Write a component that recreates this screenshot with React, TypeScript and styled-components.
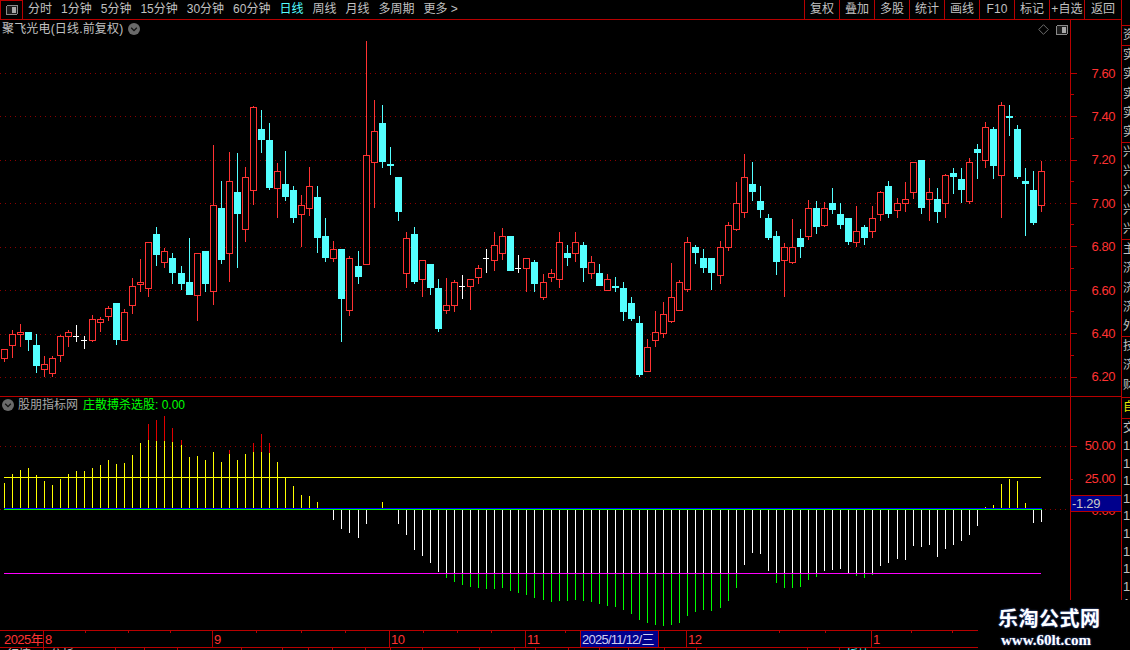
import React from "react";
import styled, { createGlobalStyle } from "styled-components";

const RED_LINE = "#b80000";
const RED = "#ff3232";
const CYAN = "#54ffff";
const GRAY = "#c0c0c0";
const FONT = `"Liberation Sans", "Noto Sans CJK SC", sans-serif`;

const Global = createGlobalStyle`
  html, body { margin: 0; padding: 0; background: #000; }
  body { font-family: ${FONT}; }
`;

const Page = styled.div`
  position: relative;
  display: flex;
  width: 1130px;
  height: 650px;
  overflow: hidden;
  background: #000;
  font-family: ${FONT};
`;

const Main = styled.div`
  display: flex;
  flex-direction: column;
  width: 1121px;
  flex: none;
`;

/* ---------- toolbar ---------- */
const Toolbar = styled.div`
  display: flex;
  align-items: stretch;
  height: 19px;
  flex: none;
  border-bottom: 1px solid ${RED_LINE};
  color: ${GRAY};
  font-size: 12px;
`;
const PanelToggle = styled.div`
  width: 23px;
  flex: none;
  box-sizing: border-box;
  display: flex;
  align-items: center;
  justify-content: center;
  border-right: 1px solid ${RED_LINE};
  border-top: 1px solid ${RED_LINE};
  border-left: 1px solid ${RED_LINE};
`;
const PeriodList = styled.div`
  display: flex;
  align-items: center;
  gap: 9px;
  padding-left: 5px;
  flex: 1;
`;
const Period = styled.span<{ $active?: boolean }>`
  color: ${(p) => (p.$active ? CYAN : GRAY)};
  line-height: 19px;
  white-space: nowrap;
`;
const ToolButton = styled.div<{ $w?: number }>`
  width: ${(p) => p.$w ?? 35}px;
  flex: none;
  box-sizing: border-box;
  border-left: 1px solid ${RED_LINE};
  text-align: center;
  line-height: 19px;
  white-space: nowrap;
  letter-spacing: 0.1px;
`;

/* ---------- panes ---------- */
const PricePane = styled.div`
  display: flex;
  height: 376px;
  flex: none;
  border-bottom: 1px solid ${RED_LINE};
  overflow: hidden;
`;
const IndicatorPane = styled.div`
  display: flex;
  height: 233px;
  flex: none;
  overflow: hidden;
`;
const Plot = styled.div`
  position: relative;
  width: 1070px;
  flex: none;
  svg.chart { display: block; }
`;
const PaneTitle = styled.div`
  position: absolute;
  left: 2px;
  top: 1px;
  display: flex;
  align-items: center;
  gap: 5px;
  font-size: 12px;
  line-height: 16px;
  color: ${GRAY};
  white-space: nowrap;
`;
const TitleText = styled.span`
  letter-spacing: 0.17px;
`;
const IndicatorTitle = styled(PaneTitle)`
  top: 0;
  gap: 4px;
  color: #a8a8a8;
`;
const Readout = styled.span`
  color: #00ff00;
  margin-left: 1px;
`;
const PaneTools = styled.div`
  position: absolute;
  right: 2px;
  top: 4px;
  display: flex;
  align-items: center;
  gap: 7px;
`;

const PriceAxis = styled.div`
  position: relative;
  flex: 1;
  box-sizing: border-box;
  border-left: 1px solid ${RED_LINE};
  padding-top: 31.8px;
`;
const PriceRow = styled.div`
  position: relative;
  height: 43.43px;
  display: flex;
  align-items: center;
  justify-content: flex-end;
  padding-right: 6px;
  &::before {
    content: "";
    position: absolute;
    left: 0;
    top: 21px;
    width: 6px;
    height: 1px;
    background: ${RED_LINE};
  }
  &::after {
    content: "";
    position: absolute;
    left: 0;
    bottom: 0;
    width: 3px;
    height: 1px;
    background: ${RED_LINE};
  }
`;
const AxisLabel = styled.span`
  color: ${RED};
  font-size: 13px;
  letter-spacing: -0.45px;
  line-height: 14px;
`;
const IndicatorAxis = styled(PriceAxis)`
  padding-top: 33px;
`;
const IndicatorRow = styled.div<{ $tick: number }>`
  position: relative;
  height: 32.5px;
  display: flex;
  align-items: center;
  justify-content: flex-end;
  padding-right: 6px;
  &::before {
    content: "";
    position: absolute;
    left: 0;
    top: 16px;
    width: ${(p) => p.$tick}px;
    height: 1px;
    background: ${RED_LINE};
  }
`;
const ValueBadge = styled.div`
  position: absolute;
  left: 0;
  right: 0;
  top: 98px;
  height: 15px;
  box-sizing: content-box;
  background: #00008c;
  border-top: 1px solid ${RED_LINE};
  border-bottom: 1px solid ${RED_LINE};
  color: #c8c8c8;
  font-size: 13px;
  line-height: 15px;
  padding-left: 1px;
  letter-spacing: -0.3px;
`;

/* ---------- time axis ---------- */
const TimeAxis = styled.div`
  position: relative;
  display: flex;
  height: 16px;
  flex: none;
  border-top: 1px solid ${RED_LINE};
  border-bottom: 1px solid ${RED_LINE};
  box-sizing: content-box;
`;
const TimeCell = styled.div<{ $w: number; $first?: boolean }>`
  width: ${(p) => p.$w}px;
  flex: none;
  box-sizing: border-box;
  border-left: ${(p) => (p.$first ? "none" : `1px solid ${RED_LINE}`)};
  padding-left: ${(p) => (p.$first ? 4 : 1)}px;
  color: ${RED};
  font-size: 13px;
  line-height: 17px;
  letter-spacing: -0.6px;
  white-space: nowrap;
  overflow: hidden;
`;
const MinorTick = styled.i`
  position: absolute;
  top: 0;
  width: 1px;
  height: 2px;
  background: ${RED_LINE};
`;
const CursorDate = styled.div`
  position: absolute;
  left: 580px;
  top: 0;
  width: 79px;
  height: 16px;
  box-sizing: border-box;
  background: #00008c;
  border-left: 1px solid ${RED_LINE};
  border-right: 1px solid ${RED_LINE};
  color: #d0d0f0;
  font-size: 13px;
  line-height: 17px;
  letter-spacing: -0.75px;
  padding-left: 1px;
  white-space: nowrap;
  overflow: hidden;
`;
const StatusRow = styled.div`
  display: flex;
  height: 3px;
  flex: none;
  overflow: hidden;
`;
const StatusCell = styled.div<{ $w: number; $color?: string; $first?: boolean }>`
  width: ${(p) => p.$w}px;
  flex: none;
  box-sizing: border-box;
  border-left: ${(p) => (p.$first ? "none" : `1px solid ${RED_LINE}`)};
  padding-left: ${(p) => (p.$first ? 7 : 6)}px;
  color: ${(p) => p.$color ?? GRAY};
  font-size: 12px;
  line-height: 14px;
  white-space: nowrap;
  overflow: hidden;
`;

/* ---------- right strip ---------- */
const Strip = styled.div`
  width: 9px;
  flex: none;
  box-sizing: border-box;
  border-left: 1px solid ${RED_LINE};
  display: flex;
  flex-direction: column;
  overflow: hidden;
`;
const StripSection = styled.div<{ $h: number; $plain?: boolean; $color?: string }>`
  height: ${(p) => p.$h}px;
  flex: none;
  box-sizing: border-box;
  border-top: ${(p) => (p.$plain ? "none" : `1px solid ${RED_LINE}`)};
  color: ${(p) => p.$color ?? GRAY};
  font-size: 12px;
  overflow: hidden;
`;
const StripChar = styled.div`
  height: 19.3px;
  line-height: 19px;
  padding-left: 1px;
  white-space: nowrap;
`;
const StripDigit = styled.div`
  height: 17.6px;
  line-height: 18px;
  padding-left: 1px;
  font-size: 13px;
  white-space: nowrap;
`;

/* ---------- watermark ---------- */
const Watermark = styled.div`
  position: absolute;
  right: 0;
  bottom: 0;
  width: 152px;
  height: 50px;
  background: #000;
  color: #fff;
  display: flex;
  flex-direction: column;
  align-items: flex-start;
  padding-left: 20px;
  box-sizing: border-box;
  text-shadow: 0 0 2px #4a70d8;
`;
const WatermarkName = styled.div`
  font-size: 20px;
  font-weight: 700;
  line-height: 26px;
  margin-top: 6px;
  letter-spacing: 0.5px;
`;
const WatermarkUrl = styled.div`
  font-family: "Liberation Serif", serif;
  font-size: 15px;
  font-weight: 700;
  line-height: 16px;
  margin-left: 3px;
`;

/* ---------- data ---------- */
type Row = [string, number, number, number, number];

const rowsA: Row[] = [
  ["r",748,748,776,785],["r",690,703,737,773],["r",672,697,704,740],["c",696,696,720,752],["c",702,735,797,818],
  ["r",768,793,809,830],["r",768,775,821,830],["r",705,709,767,785],["r",690,697,710,740],["w",675,708,708,725],
  ["w",708,720,720,746],["r",645,658,722,725],["r",651,658,670,695],["r",618,625,650,662],["c",609,609,720,734],
  ["r",628,637,722,722],["r",534,559,617,641],["r",477,547,554,575],["r",427,427,566,590],["c",381,402,465,497],
  ["r",445,454,488,503],["c",460,474,519,551],["c",498,519,552,570],["c",414,546,585,585],["r",460,460,587,662],
  ["c",453,453,552,576],["r",135,316,577,614],["c",243,324,480,491],["r",156,244,461,545],["c",159,276,342,503],
  ["r",201,232,389,425],["r",18,22,272,314],["c",30,87,120,158],["c",69,120,264,269],["r",189,214,266,353],
  ["c",153,252,291,302],["c",258,270,354,368],["r",285,316,344,442],["r",201,259,326,347],["c",258,291,414,458],
  ["c",354,408,474,485],["r",423,448,476,485],["c",447,447,597,725],
];
const rowsB: Row[] = [
  ["r",678,685,842,857],["c",663,708,741,762],["r",33,376,704,704],["r",210,304,398,533],["c",225,279,396,413],
  ["c",351,402,408,434],["c",441,441,546,572],["r",606,625,731,773],["c",591,612,756,761],["r",691,691,749,800],
  ["c",702,702,774,794],["c",747,774,897,905],["r",744,826,842,851],["r",750,757,827,845],["w",735,769,769,806],
  ["r",748,748,770,839],["r",705,715,743,761],["w",657,685,685,728],["r",606,646,692,722],["r",594,619,671,689],
  ["c",618,618,723,723],["w",675,715,715,728],["r",685,685,716,785],["c",690,696,762,785],["r",732,757,803,811],
  ["r",717,730,743,755],["r",606,637,749,773],["c",645,669,684,707],["r",606,637,671,695],["c",636,645,714,755],
  ["r",678,697,731,746],["c",702,729,768,768],["r",732,748,782,782],["c",741,768,774,785],["c",756,774,846,872],
  ["c",801,819,867,872],["c",858,879,1035,1040],["r",927,952,1025,1027],["r",843,907,932,950],["r",816,853,913,923],
  ["r",699,802,875,878],["r",750,757,842,842],["r",621,637,781,785],
];
const rowsC: Row[] = [
  ["c",465,472,489,522],["c",477,504,534,549],["c",504,504,549,600],["r",453,472,557,582],["r",396,406,473,482],
  ["r",276,340,419,423],["r",192,262,368,384],["c",216,282,306,333],["c",288,333,360,384],["c",372,384,444,450],
  ["c",423,438,516,555],["r",459,472,513,621],["r",387,472,518,522],["c",417,444,471,504],["r",330,355,440,450],
  ["c",333,354,411,432],["r",336,355,407,411],["c",294,339,360,372],["c",339,372,405,417],["c",384,384,456,465],
  ["r",348,424,458,471],["c",405,411,444,465],["r",348,385,425,444],["r",303,307,374,393],["c",273,288,372,384],
  ["r",324,340,362,384],["r",276,328,341,366],["r",216,217,308,327],["c",210,210,354,372],["r",264,307,329,393],
  ["c",294,327,366,399],["r",252,256,341,384],["c",234,249,261,312],["c",234,267,300,339],["r",204,217,335,342],
  ["c",162,177,189,267],["r",96,112,212,234],["c",111,117,228,267],["r",36,46,257,384],["c",45,78,84,138],
  ["c",105,117,261,267],["c",234,273,282,438],["c",243,300,399,405],["r",212,244,347,366],
];
const toScreen = (rows: Row[], off: number): Row[] =>
  rows.map(([k, a, b, c, d]) => [
    k,
    Math.round(off + a / 3),
    Math.round(off + b / 3),
    Math.round(off + c / 3),
    Math.round(off + d / 3),
  ]);
const candles: Row[] = [...toScreen(rowsA, 100), ...toScreen(rowsB, 30), ...toScreen(rowsC, 90)];

const colX = (i: number) => 4 + 8 * i + Math.floor((i + 0.5) / 22.2);

const yellowTops = [
  279,252,240,234,255,273,285,267,252,243,243,234,225,210,222,219,195,159,150,153,153,156,165,201,198,210,186,216,192,210,192,186,186,189,216,264,288,315,318,336,
];
const redTops: Record<number, number> = { 18: 102, 19: 90, 20: 78, 21: 114, 22: 150, 28: 180, 31: 159, 32: 132, 33: 159 };
const lows: Record<number, number> = { 41: 520, 42: 529, 43: 533, 44: 538, 45: 524 };
const lowsA = [
  72,105,150,168,189,216,234,246,255,261,264,267,267,264,273,279,285,294,300,306,303,303,300,303,306,312,318,321,330,342,360,369,375,378,375,369,348,336,330,333,324,303,264,195,159,162,213,249,
];
const lowsB = [248,248,245,224,215,197,194,191,206,212,218,209,182,173,161,164,122,125,119,155,131,119,107,89,62];
lowsA.forEach((v, k) => (lows[49 + k] = Math.round(500 + v / 3)));
lowsB.forEach((v, k) => (lows[97 + k] = Math.round(505 + v / 3)));
lows[119] = 541; lows[120] = 535; lows[121] = 526; lows[128] = 523; lows[129] = 522;
const highs: Record<number, number> = { 47: 502, 48: 508, 122: 507, 123: 505, 124: 484, 125: 479, 126: 481, 127: 503 };

const BASE_Y = 510;
const MAGENTA_Y = 573;

const PERIODS = ["分时","1分钟","5分钟","15分钟","30分钟","60分钟","日线","周线","月线","多周期","更多 >"];
const TOOLS = ["复权","叠加","多股","统计","画线","F10","标记","+自选"];
const PRICES = ["7.60","7.40","7.20","7.00","6.80","6.60","6.40","6.20"];
const GRID_Y = [73,116,160,203,247,290,334,377];
const TIME_CELLS: [number, string][] = [[43,"2025年"],[169,"8"],[177,"9"],[136,"10"],[161,"11"],[185,"12"],[259,"1"]];
const MINOR = [85,128,170,256,301,345,423,457,491,565,779,825,911,952];
const STATUS: [number, string, string?][] = [
  [43,"行情"],[72,"分析"],[29,""],[33,""],[64,""],[41,""],[26,""],[24,""],[33,""],[25,""],[32,""],[57,""],[35,""],[21,""],[33,""],[31,""],[29,""],[36,""],[32,""],[111,""],[32,""],[120,"板块",CYAN],
];

/* ---------- drawings ---------- */
const Candle = ({ i, d }: { i: number; d: Row }) => {
  const [k, hi, top, bot, lo] = d;
  const x = colX(i);
  const color = k === "r" ? RED : k === "c" ? CYAN : "#ffffff";
  const wick = <rect x={x} y={hi} width={1} height={Math.max(lo - hi, 1)} fill={color} />;
  if (k === "w") {
    return (
      <g>
        {wick}
        <rect x={x - 3} y={top} width={6} height={1} fill={color} />
      </g>
    );
  }
  if (k === "c") {
    return (
      <g>
        {wick}
        <rect x={x - 3} y={top} width={7} height={Math.max(bot - top, 2)} fill={color} />
      </g>
    );
  }
  return (
    <g>
      {wick}
      <rect x={x - 2.5} y={top + 0.5} width={6} height={Math.max(bot - top - 1, 1)} fill="#000" stroke={color} strokeWidth={1} />
    </g>
  );
};

const DotLine = ({ y, x1 = 0, x2 = 1067 }: { y: number; x1?: number; x2?: number }) => (
  <line x1={x1} x2={x2} y1={y + 0.5} y2={y + 0.5} stroke="#8c0000" strokeWidth={1} strokeDasharray="1 4" />
);

const Chevron = () => (
  <svg width="12" height="12" viewBox="0 0 12 12">
    <circle cx="6" cy="6" r="6" fill="#6a6a6a" />
    <path d="M3.2 4.8 L6 7.6 L8.8 4.8" fill="none" stroke="#111" strokeWidth="1.3" />
  </svg>
);

const ToggleIcon = () => (
  <svg width="12" height="10" viewBox="0 0 12 10" shapeRendering="crispEdges">
    <rect x="0.5" y="0.5" width="11" height="9" rx="1.5" fill="#1c1c1c" stroke="#8a8a8a" />
    <rect x="6" y="2" width="4" height="6" fill="#a8a8a8" />
  </svg>
);

const Diamond = () => (
  <svg width="11" height="11" viewBox="0 0 11 11">
    <path d="M5.5 0.7 L10.3 5.5 L5.5 10.3 L0.7 5.5 Z" fill="none" stroke="#6e6e6e" />
  </svg>
);

const PriceChart = () => (
  <svg className="chart" width="1070" height="376" viewBox="0 20 1070 376" shapeRendering="crispEdges">
    {GRID_Y.map((y) => (
      <DotLine key={y} y={y} />
    ))}
    {candles.map((d, i) => (
      <Candle key={i} i={i} d={d} />
    ))}
  </svg>
);

const IndicatorChart = () => {
  const bars: React.ReactNode[] = [];
  for (let i = 0; i < 130; i++) {
    const x = colX(i);
    if (i < yellowTops.length) {
      const top = Math.round(390 + yellowTops[i] / 3);
      bars.push(<rect key={`y${i}`} x={x} y={top} width={1} height={BASE_Y - top} fill="#ffff00" />);
      if (redTops[i] !== undefined) {
        const rt = Math.round(390 + redTops[i] / 3);
        bars.push(<rect key={`r${i}`} x={x} y={rt} width={1} height={top - rt} fill="#e00000" />);
      }
    }
    if (highs[i] !== undefined) {
      bars.push(<rect key={`h${i}`} x={x} y={highs[i]} width={1} height={BASE_Y - highs[i]} fill="#ffff00" />);
    }
    const low = lows[i];
    if (low !== undefined) {
      const whiteEnd = Math.min(low, MAGENTA_Y);
      bars.push(<rect key={`w${i}`} x={x} y={BASE_Y} width={1} height={whiteEnd - BASE_Y} fill="#ffffff" />);
      if (low > MAGENTA_Y) {
        bars.push(<rect key={`g${i}`} x={x} y={MAGENTA_Y} width={1} height={low - MAGENTA_Y} fill="#00ff00" />);
      }
    }
  }
  return (
    <svg className="chart" width="1070" height="233" viewBox="0 397 1070 233" shapeRendering="crispEdges">
      <DotLine y={446} />
      <DotLine y={509} />
      {bars}
      <rect x="4" y="477" width="1037" height="1" fill="#ffff00" />
      <rect x="4" y="573" width="1037" height="1" fill="#ff00ff" />
      <rect x="4" y="508" width="1038" height="1" fill="#0000ff" />
      <rect x="4" y="509" width="1038" height="1" fill="#00ff00" />
    </svg>
  );
};

const StripChars = ({ text }: { text: string }) => (
  <>
    {text.split("").map((c, i) => (
      <StripChar key={i}>{c}</StripChar>
    ))}
  </>
);

export default function App() {
  return (
    <Page>
      <Global />
      <Main>
        <Toolbar>
          <PanelToggle>
            <ToggleIcon />
          </PanelToggle>
          <PeriodList>
            {PERIODS.map((p) => (
              <Period key={p} $active={p === "日线"}>
                {p}
              </Period>
            ))}
          </PeriodList>
          {TOOLS.map((t) => (
            <ToolButton key={t}>{t}</ToolButton>
          ))}
          <ToolButton $w={37}>返回</ToolButton>
        </Toolbar>

        <PricePane>
          <Plot>
            <PriceChart />
            <PaneTitle>
              <TitleText>聚飞光电(日线.前复权)</TitleText>
              <Chevron />
            </PaneTitle>
            <PaneTools>
              <Diamond />
              <ToggleIcon />
            </PaneTools>
          </Plot>
          <PriceAxis>
            {PRICES.map((p) => (
              <PriceRow key={p}>
                <AxisLabel>{p}</AxisLabel>
              </PriceRow>
            ))}
          </PriceAxis>
        </PricePane>

        <IndicatorPane>
          <Plot>
            <IndicatorChart />
            <IndicatorTitle>
              <Chevron />
              <span>股朋指标网</span>
              <Readout>庄散搏杀选股: 0.00</Readout>
            </IndicatorTitle>
          </Plot>
          <IndicatorAxis>
            <IndicatorRow $tick={6}>
              <AxisLabel>50.00</AxisLabel>
            </IndicatorRow>
            <IndicatorRow $tick={2}>
              <AxisLabel>25.00</AxisLabel>
            </IndicatorRow>
            <IndicatorRow $tick={0}>
              <AxisLabel>0.00</AxisLabel>
            </IndicatorRow>
            <ValueBadge>-1.29</ValueBadge>
          </IndicatorAxis>
        </IndicatorPane>

        <TimeAxis>
          {TIME_CELLS.map(([w, t], i) => (
            <TimeCell key={t} $w={w} $first={i === 0}>
              {t}
            </TimeCell>
          ))}
          {MINOR.map((x) => (
            <MinorTick key={x} style={{ left: x }} />
          ))}
          <CursorDate>2025/11/12/三</CursorDate>
        </TimeAxis>

        <StatusRow>
          {STATUS.map(([w, t, c], i) => (
            <StatusCell key={i} $w={w} $color={c} $first={i === 0}>
              {t}
            </StatusCell>
          ))}
        </StatusRow>
      </Main>

      <Strip>
        <StripSection $h={25} $plain />
        <StripSection $h={20}>
          <StripChars text="资" />
        </StripSection>
        <StripSection $h={97}>
          <StripChars text="实实实实实" />
        </StripSection>
        <StripSection $h={97}>
          <StripChars text="兴兴兴兴兴" />
        </StripSection>
        <StripSection $h={97}>
          <StripChars text="主济济济外" />
        </StripSection>
        <StripSection $h={61}>
          <StripChars text="技济财" />
        </StripSection>
        <StripSection $h={21} $color="#e8e800">
          <StripChars text="自" />
        </StripSection>
        <StripSection $h={19}>
          <StripChars text="交" />
        </StripSection>
        <StripSection $h={213} $plain>
          {Array.from({ length: 10 }).map((_, i) => (
            <StripDigit key={i}>1</StripDigit>
          ))}
        </StripSection>
      </Strip>

      <Watermark>
        <WatermarkName>乐淘公式网</WatermarkName>
        <WatermarkUrl>www.60lt.com</WatermarkUrl>
      </Watermark>
    </Page>
  );
}
